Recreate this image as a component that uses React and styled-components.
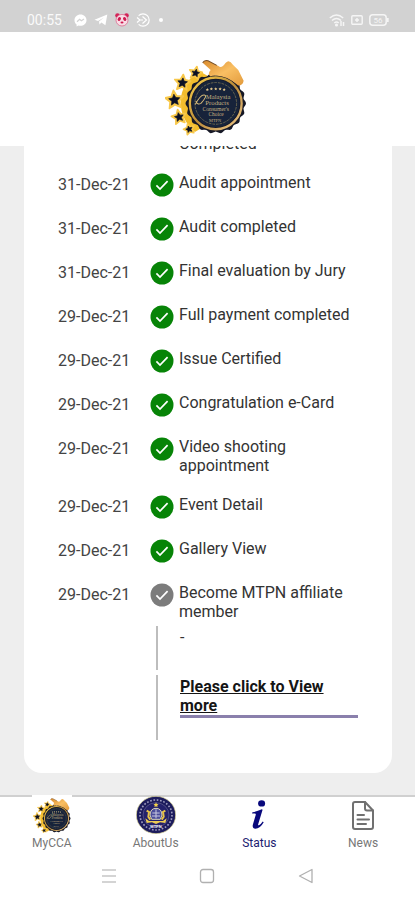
import React from "react";
import styled, { createGlobalStyle } from "styled-components";

const GlobalStyle = createGlobalStyle`
  *, *::before, *::after { box-sizing: border-box; }
  body { margin: 0; background: #fff; font-family: Roboto, "Liberation Sans", sans-serif; }
`;

const Screen = styled.div`
  display: flex;
  flex-direction: column;
  height: 100vh;
  overflow: hidden;
  background: #fff;
  color: #333;
`;

const StatusBar = styled.div`
  display: flex;
  flex: none;
  justify-content: space-between;
  height: 32px;
  padding: 8px 26px 0 27px;
  background: #d2d2d2;
  color: #fafafa;
  font-size: 14px;
  line-height: 24px;
`;

const StatusGroup = styled.div`
  display: flex;
  align-items: center;
  height: 24px;
  gap: ${(p) => p.$gap}px;
`;

const Clock = styled.time`
  width: 40px;
`;

const Header = styled.header`
  display: flex;
  flex: none;
  align-items: flex-end;
  justify-content: center;
  height: 114px;
  padding: 0 4px 9px 0;
  background: #fff;
`;

const Content = styled.main`
  display: flex;
  flex: 1;
  flex-direction: column;
  justify-content: flex-end;
  min-height: 0;
  padding: 0 23px 22px 24px;
  overflow: hidden;
  background: #eee;
`;

const Card = styled.section`
  padding: 24px 34px 28px;
  border-radius: 18px;
  background: #fff;
`;

const Timeline = styled.ol`
  margin: 0;
  padding: 0;
  list-style: none;
`;

const Step = styled.li`
  display: grid;
  grid-template-columns: 92px 24px 1fr;
  padding-bottom: ${(p) => (p.$last ? 5 : 20)}px;
  font-size: 16px;
`;

const StepDate = styled.time`
  line-height: 24px;
  color: #444;
`;

const StepTitle = styled.span`
  grid-column: 3;
  padding-left: 5px;
  line-height: 19px;
  white-space: pre-line;
`;

const Detail = styled.div`
  display: grid;
  grid-template-columns: 2px 1fr;
  column-gap: 22px;
  margin: 0 0 5px 98px;
  min-height: ${(p) => p.$height}px;
  font-size: 16px;
  line-height: 19px;
`;

const Connector = styled.span`
  background: #bdbdbd;
`;

const DetailText = styled.div`
  padding-top: 2px;
`;

const MoreLink = styled.a`
  display: block;
  border-bottom: 3px solid #8a80ac;
  color: #151515;
  font-weight: 700;
  text-decoration: underline;
`;

const TabBar = styled.nav`
  display: grid;
  flex: none;
  grid-template-columns: repeat(4, 1fr);
  height: 57px;
  border-top: 2px solid #d0d0d0;
  background: #fff;
`;

const Tab = styled.a`
  display: flex;
  flex-direction: column;
  align-items: center;
  color: ${(p) => (p.$active ? "#1c1c70" : "#777")};
  font-size: 12px;
  line-height: 16px;
  text-decoration: none;
`;

const TabIcon = styled.span`
  display: flex;
  align-items: center;
  justify-content: center;
  width: 40px;
  height: 40px;
  margin-top: -2px;
  background: ${(p) => (p.$opaque ? "#fff" : "transparent")};
`;

const SystemNav = styled.div`
  display: grid;
  flex: none;
  grid-template-columns: repeat(3, 1fr);
  height: 48px;
  padding: 0 60px;
  background: #fff;
`;

const SystemButton = styled.button`
  display: flex;
  align-items: center;
  justify-content: center;
  padding: 0;
  border: 0;
  background: none;
`;

const starPoints = (cx, cy, r, turn = 0) =>
  Array.from({ length: 10 }, (_, i) => {
    const radius = i % 2 ? r * 0.48 : r;
    const a = (Math.PI / 5) * i - Math.PI / 2 + turn;
    return `${(cx + radius * Math.cos(a)).toFixed(1)},${(cy + radius * Math.sin(a)).toFixed(1)}`;
  }).join(" ");

const scallop = (cx, cy, r, depth, lobes) =>
  Array.from({ length: lobes * 8 }, (_, i) => {
    const a = (2 * Math.PI * i) / (lobes * 8);
    const radius = r + depth * Math.cos(a * lobes);
    return `${(cx + radius * Math.cos(a)).toFixed(1)},${(cy + radius * Math.sin(a)).toFixed(1)}`;
  }).join(" ");

const STARS = [
  [137, 75, 20, 0.2],
  [98, 104, 25, 0.1],
  [74, 155, 29, -0.1],
  [88, 206, 23, -0.2],
  [118, 242, 17, -0.3],
];

function AwardLogo({ width, height, id }) {
  return (
    <svg width={width} height={height} viewBox="46 28 244 236" role="img" aria-label="Consumer's Choice Award">
      <defs>
        <linearGradient id={`${id}-hand`} x1="0" y1="0" x2="1" y2="1">
          <stop offset="0" stopColor="#d98a2c" />
          <stop offset="0.5" stopColor="#f9bf63" />
          <stop offset="1" stopColor="#e29a3c" />
        </linearGradient>
        <linearGradient id={`${id}-gold`} x1="0" y1="0" x2="1" y2="1">
          <stop offset="0" stopColor="#fbd24a" />
          <stop offset="0.5" stopColor="#b98a3a" />
          <stop offset="1" stopColor="#f0c98a" />
        </linearGradient>
      </defs>
      <path d="M150 70Q95 100 92 160Q94 215 135 250L165 232Q122 205 122 160Q124 115 175 84Z" fill="#f3bd2d" />
      {STARS.map(([x, y, r, t]) => (
        <polygon key={y} points={starPoints(x, y, r, t)} fill="#f8c84a" stroke="#f8c84a" strokeWidth="5" strokeLinejoin="round" />
      ))}
      {STARS.map(([x, y, r, t]) => (
        <polygon key={y} points={starPoints(x, y, r * 0.6, t)} fill="#0b1024" stroke="#0b1024" strokeWidth="2" />
      ))}
      <polygon points={scallop(197, 165, 87, 3, 18)} fill="#161826" />
      <circle cx="197" cy="165" r="77" fill="none" stroke={`url(#${id}-gold)`} strokeWidth="7" />
      <circle cx="197" cy="165" r="71" fill="#17233a" />
      <circle cx="197" cy="165" r="62" fill="none" stroke="#8d8157" strokeWidth="2" strokeDasharray="8 3" />
      {[172, 184, 197, 210, 222].map((x, i) => (
        <polygon key={x} points={starPoints(x, i % 4 ? 122 : 124, 5)} fill="#e3c78c" />
      ))}
      <g fill="#c4b080" textAnchor="middle" fontFamily="Liberation Serif, serif">
        <text x="204" y="151" fontSize="20">Malaysia</text>
        <text x="201" y="169" fontSize="20">Products</text>
        <text x="197" y="187" fontSize="17">Consumer's</text>
        <text x="198" y="203" fontSize="16">Choice</text>
        <text x="195" y="220" fontSize="13">MTPN</text>
      </g>
      <path d="M136 168Q152 138 163 140T153 165Q142 171 138 158" fill="none" stroke="#d5b878" strokeWidth="3" />
      <path d="M158 44Q163 35 174 38L205 54Q214 63 226 45Q237 32 248 50L264 66L280 98Q278 112 264 112Q222 75 180 84Q172 76 182 66Z" fill={`url(#${id}-hand)`} />
      <path d="M158 44Q163 35 174 38L200 52" fill="none" stroke="#76502a" strokeWidth="3" />
    </svg>
  );
}

function AboutLogo() {
  return (
    <svg width="40" height="38" viewBox="0 0 120 114" role="img" aria-label="MTPN emblem">
      <ellipse cx="60" cy="57" rx="59" ry="56" fill="#1c1b5c" stroke="#e6df9b" strokeWidth="2" />
      <ellipse cx="60" cy="57" rx="48" ry="45" fill="none" stroke="#9d9abd" strokeWidth="5" strokeDasharray="5 5" />
      <ellipse cx="60" cy="57" rx="39" ry="37" fill="#24216b" stroke="#aaa7c2" strokeWidth="1" />
      <polygon points={starPoints(60, 27, 8)} fill="#f4d34b" />
      <path d="M42 57Q43 37 60 37Q77 37 78 57L73 70H47Z" fill="#4b4d9b" stroke="#d8d4b8" strokeWidth="3" />
      <path d="M49 51H71M48 60H72M60 40V67" stroke="#c9c8df" strokeWidth="3" />
      <path d="M32 44L39 48L37 62L43 71M88 44L81 48L83 62L77 71" fill="none" stroke="#e8c34a" strokeWidth="6" />
      <path d="M28 67L39 75H81L92 67L88 81L72 79L60 84L48 79L32 81Z" fill="#edcc55" />
      <text x="60" y="97" fill="#fff" textAnchor="middle" fontFamily="Liberation Sans, sans-serif" fontSize="12" fontWeight="700">MTPN</text>
    </svg>
  );
}

const InfoIcon = () => (
  <svg width="16" height="30" viewBox="0 0 16 30" aria-hidden="true" fill="#08087c">
    <ellipse cx="10.6" cy="3.4" rx="3.5" ry="3.2" />
    <path d="M1.4 12.3Q6 11.5 10.9 9.3L11.6 9.7L7.1 24.4Q6.9 25.8 8.3 25.1Q10.1 23.9 11.7 21.5L12.7 22.2Q9 28.7 4.4 28.7Q.9 28.5 1.9 24.4L4.7 15.1Q5.2 13.4 3.8 13.4L1.1 13.5Z" />
  </svg>
);

const NewsIcon = () => (
  <svg width="22" height="29" viewBox="0 0 22 29" aria-hidden="true" fill="none" stroke="#707070" strokeWidth="2" strokeLinejoin="round" strokeLinecap="round">
    <path d="M3 1H13L21 9.5V26Q21 28 19 28H3Q1 28 1 26V3Q1 1 3 1Z" />
    <path d="M13 1V7.5Q13 9.5 15 9.5H21" />
    <path d="M5.500 14H12M5.500 18.500H17M5.500 23H14" />
  </svg>
);

function CheckIcon({ done }) {
  return (
    <svg width="24" height="24" viewBox="0 0 24 24" role="img" aria-label={done ? "Done" : "Pending"}>
      <circle cx="12" cy="12" r="11.5" fill={done ? "#078407" : "#7c7c7c"} />
      <path d="M6.4 12.4L10 16L17.6 8.2" fill="none" stroke="#fff" strokeWidth="1.7" />
    </svg>
  );
}

const MessengerIcon = () => (
  <svg width="13" height="13" viewBox="0 0 13 13" aria-hidden="true">
    <path d="M6.5.5C3 .5.5 3 .5 6.2c0 1.8.8 3.3 2.1 4.3v2l1.9-1c3.9 1 8-1.2 8-5.3C12.5 3 10 .5 6.5.5Z" fill="#fff" />
    <path d="M3 7.7L5.6 5.2L7.4 6.8L10 5" fill="none" stroke="#d2d2d2" strokeWidth="1.2" />
  </svg>
);

const TelegramIcon = () => (
  <svg width="14" height="12" viewBox="0 0 14 12" aria-hidden="true">
    <path d="M.5 5.8L13.3.6L11.4 11.3L7.4 8.6L5.5 10.5L5 7.6L10 3.4L4 7.1Z" fill="#fff" />
  </svg>
);

const PandaIcon = () => (
  <svg width="14" height="14" viewBox="0 0 14 14" aria-hidden="true">
    <circle cx="2.5" cy="2.5" r="2.3" fill="#d32358" />
    <circle cx="11.5" cy="2.5" r="2.3" fill="#d32358" />
    <ellipse cx="7" cy="7.2" rx="6" ry="5.8" fill="#f8dce5" stroke="#dc6d90" strokeWidth=".8" />
    <ellipse cx="4.3" cy="6" rx="1.5" ry="2.1" transform="rotate(30 4.3 6)" fill="#ce1b50" />
    <ellipse cx="9.7" cy="6" rx="1.5" ry="2.1" transform="rotate(-30 9.7 6)" fill="#ce1b50" />
    <ellipse cx="7" cy="9.5" rx="1.5" ry="1" fill="#ce1b50" />
  </svg>
);

const ShareIcon = () => (
  <svg width="15" height="14" viewBox="0 0 15 14" aria-hidden="true" fill="none" stroke="#fff" strokeWidth="1.2">
    <path d="M2.6 2.6A6.2 6.2 0 1 1 2.6 11.4" />
    <path d="M1 4.5L4 7L1 9.5M4 7H7M6.500 3.500L10.500 7L6.500 10.500" />
  </svg>
);

const WifiIcon = () => (
  <svg width="16" height="13" viewBox="0 0 16 13" aria-hidden="true" fill="none" stroke="#f5f5f5" strokeWidth="1.5">
    <path d="M.8 4Q7.5-2 14.2 4M3 6.5Q7.5 2.5 12 6.5M5.3 9Q7.5 7 9.7 9" />
    <circle cx="7.5" cy="11" r=".8" />
    <path d="M12 7V12M14.5 8V12" />
  </svg>
);

const CastIcon = () => (
  <svg width="12" height="10" viewBox="0 0 12 10" aria-hidden="true">
    <rect x=".8" y=".8" width="10.4" height="8.4" rx="1" fill="none" stroke="#f5f5f5" strokeWidth="1.4" />
    <path d="M6 3V7M4 5H8" stroke="#f5f5f5" strokeWidth="1.5" />
  </svg>
);

const BatteryIcon = () => (
  <svg width="20" height="12" viewBox="0 0 20 12" aria-hidden="true">
    <rect x=".8" y=".8" width="16.4" height="10.4" rx="3" fill="none" stroke="#f5f5f5" strokeWidth="1.5" />
    <path d="M18.7 4V8" stroke="#f5f5f5" strokeWidth="2" />
    <text x="9" y="9" fontSize="8" fill="#f5f5f5" textAnchor="middle" fontFamily="Roboto, sans-serif">56</text>
  </svg>
);

const Dot = () => (
  <svg width="6" height="6" viewBox="0 0 6 6" aria-hidden="true">
    <circle cx="3" cy="3" r="2" fill="#fff" />
  </svg>
);

const STEPS = [
  { date: "31-Dec-21", title: "Audit appointment", done: true },
  { date: "31-Dec-21", title: "Audit completed", done: true },
  { date: "31-Dec-21", title: "Final evaluation by Jury", done: true },
  { date: "29-Dec-21", title: "Full payment completed", done: true },
  { date: "29-Dec-21", title: "Issue Certified", done: true },
  { date: "29-Dec-21", title: "Congratulation e-Card", done: true },
  { date: "29-Dec-21", title: "Video shooting\nappointment", done: true },
  { date: "29-Dec-21", title: "Event Detail", done: true },
  { date: "29-Dec-21", title: "Gallery View", done: true },
  { date: "29-Dec-21", title: "Become MTPN affiliate member", done: false },
];

const TABS = [
  { label: "MyCCA", icon: <AwardLogo width={38} height={37} id="tab" />, opaque: true },
  { label: "AboutUs", icon: <AboutLogo /> },
  { label: "Status", icon: <InfoIcon />, active: true },
  { label: "News", icon: <NewsIcon /> },
];

export default function App() {
  return (
    <>
      <GlobalStyle />
      <Screen>
        <StatusBar>
          <StatusGroup $gap={7}>
            <Clock>00:55</Clock>
            <MessengerIcon />
            <TelegramIcon />
            <PandaIcon />
            <ShareIcon />
            <Dot />
          </StatusGroup>
          <StatusGroup $gap={6}>
            <WifiIcon />
            <CastIcon />
            <BatteryIcon />
          </StatusGroup>
        </StatusBar>
        <Header>
          <AwardLogo width={82} height={80} id="header" />
        </Header>
        <Content>
          <Card>
            <Timeline>
              <Step>
                <StepTitle>Completed</StepTitle>
              </Step>
              {STEPS.map((step, i) => (
                <Step key={step.title} $last={i === STEPS.length - 1}>
                  <StepDate>{step.date}</StepDate>
                  <CheckIcon done={step.done} />
                  <StepTitle>{step.title}</StepTitle>
                </Step>
              ))}
            </Timeline>
            <Detail $height={44}>
              <Connector />
              <DetailText>-</DetailText>
            </Detail>
            <Detail $height={65}>
              <Connector />
              <DetailText>
                <MoreLink href="#more">Please click to View more</MoreLink>
              </DetailText>
            </Detail>
          </Card>
        </Content>
        <TabBar>
          {TABS.map((tab) => (
            <Tab key={tab.label} href={`#${tab.label}`} $active={tab.active} aria-current={tab.active ? "page" : undefined}>
              <TabIcon $opaque={tab.opaque}>{tab.icon}</TabIcon>
              {tab.label}
            </Tab>
          ))}
        </TabBar>
        <SystemNav>
          <SystemButton aria-label="Recent apps">
            <svg width="16" height="16" viewBox="0 0 16 16" stroke="#c6c6c6" strokeWidth="1.5">
              <path d="M1 2H15M1 8H15M1 14H15" />
            </svg>
          </SystemButton>
          <SystemButton aria-label="Home">
            <svg width="16" height="16" viewBox="0 0 16 16" fill="none" stroke="#b0b0b0" strokeWidth="1.3">
              <rect x="1.5" y="1.5" width="13" height="13" rx="2.5" />
            </svg>
          </SystemButton>
          <SystemButton aria-label="Back">
            <svg width="16" height="16" viewBox="0 0 16 16" fill="none" stroke="#b0b0b0" strokeWidth="1.3" strokeLinejoin="round">
              <path d="M14 1.5V14.5L1.5 8Z" />
            </svg>
          </SystemButton>
        </SystemNav>
      </Screen>
    </>
  );
}
